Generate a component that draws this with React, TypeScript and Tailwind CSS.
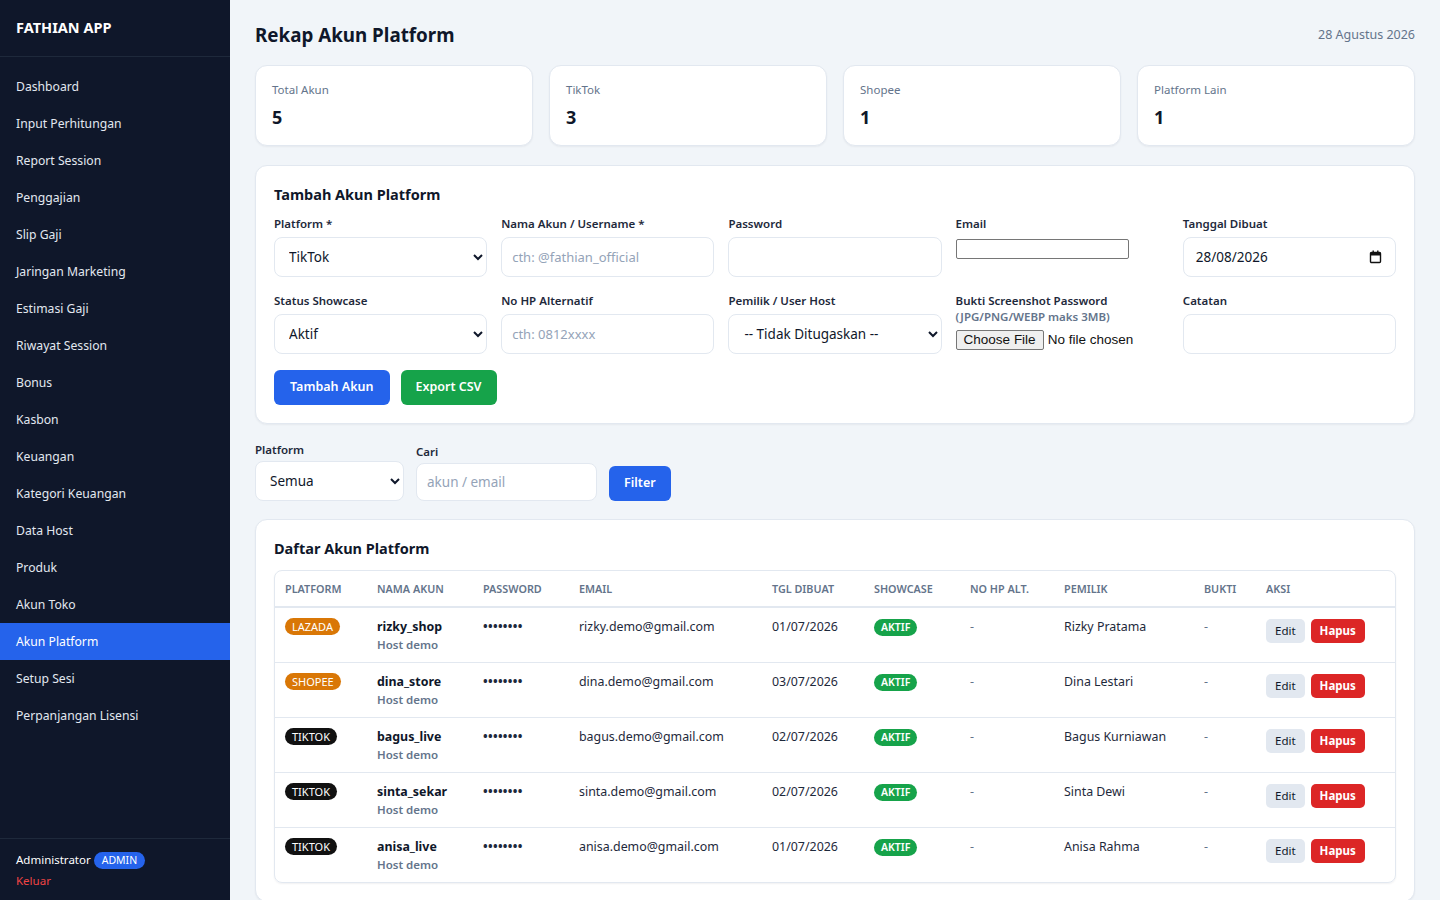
import React from 'react';

const menu = [
  'Dashboard',
  'Input Perhitungan',
  'Report Session',
  'Penggajian',
  'Slip Gaji',
  'Jaringan Marketing',
  'Estimasi Gaji',
  'Riwayat Session',
  'Bonus',
  'Kasbon',
  'Keuangan',
  'Kategori Keuangan',
  'Data Host',
  'Produk',
  'Akun Toko',
  'Akun Platform',
  'Setup Sesi',
  'Perpanjangan Lisensi',
];

const stats = [
  { label: 'Total Akun', value: '5' },
  { label: 'TikTok', value: '3' },
  { label: 'Shopee', value: '1' },
  { label: 'Platform Lain', value: '1' },
];

type Row = {
  platform: 'LAZADA' | 'SHOPEE' | 'TIKTOK';
  name: string;
  email: string;
  date: string;
  owner: string;
};

const rows: Row[] = [
  { platform: 'LAZADA', name: 'rizky_shop', email: 'rizky.demo@gmail.com', date: '01/07/2026', owner: 'Rizky Pratama' },
  { platform: 'SHOPEE', name: 'dina_store', email: 'dina.demo@gmail.com', date: '03/07/2026', owner: 'Dina Lestari' },
  { platform: 'TIKTOK', name: 'bagus_live', email: 'bagus.demo@gmail.com', date: '02/07/2026', owner: 'Bagus Kurniawan' },
  { platform: 'TIKTOK', name: 'sinta_sekar', email: 'sinta.demo@gmail.com', date: '02/07/2026', owner: 'Sinta Dewi' },
  { platform: 'TIKTOK', name: 'anisa_live', email: 'anisa.demo@gmail.com', date: '01/07/2026', owner: 'Anisa Rahma' },
];

const badgeColor: Record<Row['platform'], string> = {
  LAZADA: 'bg-[#d97706]',
  SHOPEE: 'bg-[#d97706]',
  TIKTOK: 'bg-[#111111]',
};

const inputCls =
  'h-[40px] w-full rounded-[8px] border border-[#e2e8f0] bg-white px-[10px] text-[13px] text-[#0f172a] placeholder:text-[#94a3b8] outline-none';
const selectCls =
  'h-[40px] w-full rounded-[8px] border border-[#e2e8f0] bg-white px-[10px] text-[13.5px] text-[#0f172a] outline-none';
const labelCls = 'mb-[5px] block text-[11.5px] font-semibold leading-[16px] text-[#1e293b]';

function Field({ label, children }: { label: string; children: React.ReactNode }) {
  return (
    <div>
      <label className={labelCls}>{label}</label>
      {children}
    </div>
  );
}

function Sidebar() {
  return (
    <aside className="sticky top-0 flex h-screen w-[230px] shrink-0 flex-col bg-[#0f172a] text-white">
      <div className="border-b border-[#1e293b] px-4 pt-[18px] pb-[19px] text-[14.5px] font-bold leading-[19px]">
        FATHIAN APP
      </div>
      <nav className="flex-1 pt-[11px]">
        {menu.map((m) => (
          <a
            key={m}
            href="#"
            className={
              'block px-4 py-[9px] text-[12.2px] leading-[19px] text-[#e2e8f0] ' +
              (m === 'Akun Platform' ? 'bg-[#2563eb] text-white' : '')
            }
          >
            {m}
          </a>
        ))}
      </nav>
      <div className="border-t border-[#1e293b] px-4 pt-[12px] pb-[11px]">
        <div className="flex items-center gap-[3px] text-[11.5px] leading-[18px]">
          Administrator
          <span className="rounded-full bg-[#2563eb] px-[8px] text-[10.5px] leading-[17px] text-white">ADMIN</span>
        </div>
        <a href="#" className="mt-[4px] block text-[11.5px] leading-[16px] text-[#ef4444]">
          Keluar
        </a>
      </div>
    </aside>
  );
}

function CalendarIcon() {
  return (
    <svg width="13" height="14" viewBox="0 0 13 14" fill="none">
      <rect x="1.5" y="2.5" width="10" height="10" rx="1" stroke="#111" strokeWidth="1.4" />
      <rect x="1.5" y="2.5" width="10" height="3" fill="#111" />
      <rect x="3.5" y="0.5" width="1.4" height="3" fill="#111" />
      <rect x="8.1" y="0.5" width="1.4" height="3" fill="#111" />
    </svg>
  );
}

function FormCard() {
  return (
    <section className="rounded-[12px] border border-[#e2e8f0] bg-white px-[18px] pt-[18px] pb-[18px] shadow-[0_1px_2px_rgba(15,23,42,0.05)]">
      <h2 className="mb-[12px] text-[14.5px] font-bold leading-[20px] text-[#0f172a]">Tambah Akun Platform</h2>
      <div className="grid grid-cols-5 gap-x-[14px] gap-y-[16px]">
        <Field label="Platform *">
          <select className={selectCls} defaultValue="TikTok">
            <option>TikTok</option>
            <option>Shopee</option>
            <option>Lazada</option>
          </select>
        </Field>
        <Field label="Nama Akun / Username *">
          <input className={inputCls} placeholder="cth: @fathian_official" />
        </Field>
        <Field label="Password">
          <input className={inputCls} type="password" />
        </Field>
        <Field label="Email">
          <input type="email" className="h-[20px] w-[173px] rounded-[2px] border border-[#767676] bg-white" />
        </Field>
        <Field label="Tanggal Dibuat">
          <div className="flex h-[40px] w-full items-center justify-between rounded-[8px] border border-[#e2e8f0] bg-white pr-[13px] pl-[12px] text-[13.5px] text-[#0f172a]">
            <span>28/08/2026</span>
            <CalendarIcon />
          </div>
        </Field>
        <Field label="Status Showcase">
          <select className={selectCls} defaultValue="Aktif">
            <option>Aktif</option>
            <option>Nonaktif</option>
          </select>
        </Field>
        <Field label="No HP Alternatif">
          <input className={inputCls} placeholder="cth: 0812xxxx" />
        </Field>
        <Field label="Pemilik / User Host">
          <select className={selectCls + ' pl-[11px]'} defaultValue="none">
            <option value="none">-- Tidak Ditugaskan --</option>
          </select>
        </Field>
        <div>
          <label className="block text-[11.5px] font-semibold leading-[16px] text-[#1e293b]">Bukti Screenshot Password</label>
          <div className="text-[11.5px] font-semibold leading-[16px] text-[#64748b]">(JPG/PNG/WEBP maks 3MB)</div>
          <input
            type="file"
            className="mt-[5px] block text-[13.5px] leading-[18px] text-[#111] [font-family:'Liberation_Sans',Arial,sans-serif] file:mr-[4px] file:rounded-[2px] file:border file:border-[#767676] file:bg-[#efefef] file:px-[7px] file:py-[0px] file:text-[13.5px] file:text-[#111]"
          />
        </div>
        <Field label="Catatan">
          <input className={inputCls} />
        </Field>
      </div>
      <div className="mt-[16px] flex gap-[11px]">
        <button className="h-[35px] rounded-[6px] bg-[#2563eb] px-[16px] text-[12.5px] font-semibold text-white">Tambah Akun</button>
        <button className="h-[35px] rounded-[6px] bg-[#16a34a] px-[15px] text-[12.5px] font-semibold text-white">Export CSV</button>
      </div>
    </section>
  );
}

function FilterBar() {
  return (
    <div className="flex items-end gap-[12px]">
      <div>
        <label className="mb-[3px] block text-[11.5px] font-semibold leading-[16px] text-[#1e293b]">Platform</label>
        <select className="h-[40px] w-[149px] rounded-[8px] border border-[#e2e8f0] bg-white px-[10px] text-[13.5px] text-[#0f172a] outline-none" defaultValue="Semua">
          <option>Semua</option>
          <option>TikTok</option>
          <option>Shopee</option>
          <option>Lazada</option>
        </select>
      </div>
      <div>
        <label className="mb-[3px] block text-[11.5px] font-semibold leading-[16px] text-[#1e293b]">Cari</label>
        <input className="h-[38px] w-[181px] rounded-[8px] border border-[#e2e8f0] bg-white px-[10px] text-[13.5px] placeholder:text-[#94a3b8] outline-none" placeholder="akun / email" />
      </div>
      <button className="h-[35px] rounded-[6px] bg-[#2563eb] px-[15px] text-[12.5px] font-semibold text-white">Filter</button>
    </div>
  );
}

const heads: { label: string; w: string }[] = [
  { label: 'PLATFORM', w: 'w-[92px]' },
  { label: 'NAMA AKUN', w: 'w-[106px]' },
  { label: 'PASSWORD', w: 'w-[96px]' },
  { label: 'EMAIL', w: 'w-[193px]' },
  { label: 'TGL DIBUAT', w: 'w-[102px]' },
  { label: 'SHOWCASE', w: 'w-[96px]' },
  { label: 'NO HP ALT.', w: 'w-[94px]' },
  { label: 'PEMILIK', w: 'w-[140px]' },
  { label: 'BUKTI', w: 'w-[62px]' },
  { label: 'AKSI', w: '' },
];

function AccountTable() {
  return (
    <section className="rounded-[12px] border border-[#e2e8f0] bg-white px-[18px] pt-[18px] pb-[18px] shadow-[0_1px_2px_rgba(15,23,42,0.05)]">
      <h2 className="mb-[12px] text-[14.5px] font-bold leading-[20px] text-[#0f172a]">Daftar Akun Platform</h2>
      <div className="overflow-hidden rounded-[8px] border border-[#e2e8f0] shadow-[0_1px_2px_rgba(15,23,42,0.06)]">
        <table className="w-full table-fixed border-collapse text-left">
          <thead>
            <tr className="border-b-2 border-[#e2e8f0]">
              {heads.map((h) => (
                <th key={h.label} className={h.w + ' px-[10px] py-[10px] text-[10.8px] font-semibold leading-[15px] text-[#64748b]'}>
                  {h.label}
                </th>
              ))}
            </tr>
          </thead>
          <tbody className="text-[12.4px] leading-[18px] text-[#1e293b]">
            {rows.map((r, i) => (
              <tr key={r.name} className={i < rows.length - 1 ? 'border-b border-[#e2e8f0]' : ''}>
                <td className="px-[10px] pt-[10px] pb-[9px] align-top">
                  <span className={badgeColor[r.platform] + ' inline-block rounded-full px-[7px] text-[11px] leading-[17px] text-white'}>
                    {r.platform}
                  </span>
                </td>
                <td className="px-[10px] pt-[10px] pb-[9px] align-top">
                  <div className="font-bold text-[#0f172a]">{r.name}</div>
                  <div className="text-[11.5px] font-semibold leading-[17px] text-[#64748b]">Host demo</div>
                </td>
                <td className="px-[10px] pt-[10px] pb-[9px] align-top font-bold tracking-[0.3px]">••••••••</td>
                <td className="px-[10px] pt-[10px] pb-[9px] align-top">{r.email}</td>
                <td className="px-[10px] pt-[10px] pb-[9px] align-top">{r.date}</td>
                <td className="px-[10px] pt-[10px] pb-[9px] align-top">
                  <span className="inline-block rounded-full bg-[#16a34a] px-[7px] text-[10.5px] font-semibold leading-[17px] text-white">AKTIF</span>
                </td>
                <td className="px-[10px] pt-[10px] pb-[9px] align-top text-[#64748b]">-</td>
                <td className="px-[10px] pt-[10px] pb-[9px] align-top">{r.owner}</td>
                <td className="px-[10px] pt-[10px] pb-[9px] align-top text-[#64748b]">-</td>
                <td className="px-[10px] pt-[10px] pb-[9px] align-top">
                  <div className="flex gap-[6px] pt-[1px]">
                    <button className="h-[24px] rounded-[5px] bg-[#e2e8f0] px-[9px] text-[11.5px] text-[#0f172a]">Edit</button>
                    <button className="h-[24px] rounded-[5px] bg-[#dc2626] px-[9px] text-[11.5px] font-bold text-white">Hapus</button>
                  </div>
                </td>
              </tr>
            ))}
          </tbody>
        </table>
      </div>
    </section>
  );
}

export default function App() {
  return (
    <div className="flex min-h-screen bg-[#f1f5f9] [font-family:'Noto_Sans',Inter,sans-serif]">
      <Sidebar />
      <main className="flex-1 px-[25px] pt-[21px] pb-[30px]">
        <div className="mb-[16px] flex items-center justify-between">
          <h1 className="text-[18.8px] font-bold leading-[28px] text-[#0f172a]">Rekap Akun Platform</h1>
          <span className="text-[12.5px] text-[#64748b]">28 Agustus 2026</span>
        </div>
        <div className="mb-[19px] grid grid-cols-4 gap-[16px]">
          {stats.map((s) => (
            <div key={s.label} className="h-[81px] rounded-[12px] border border-[#e2e8f0] bg-white px-[16px] pt-[16px] shadow-[0_1px_2px_rgba(15,23,42,0.05)]">
              <div className="text-[11.5px] leading-[16px] text-[#64748b]">{s.label}</div>
              <div className="mt-[7px] text-[18px] font-bold leading-[24px] text-[#0f172a]">{s.value}</div>
            </div>
          ))}
        </div>
        <FormCard />
        <div className="mt-[18px] mb-[18px]">
          <FilterBar />
        </div>
        <AccountTable />
      </main>
    </div>
  );
}
